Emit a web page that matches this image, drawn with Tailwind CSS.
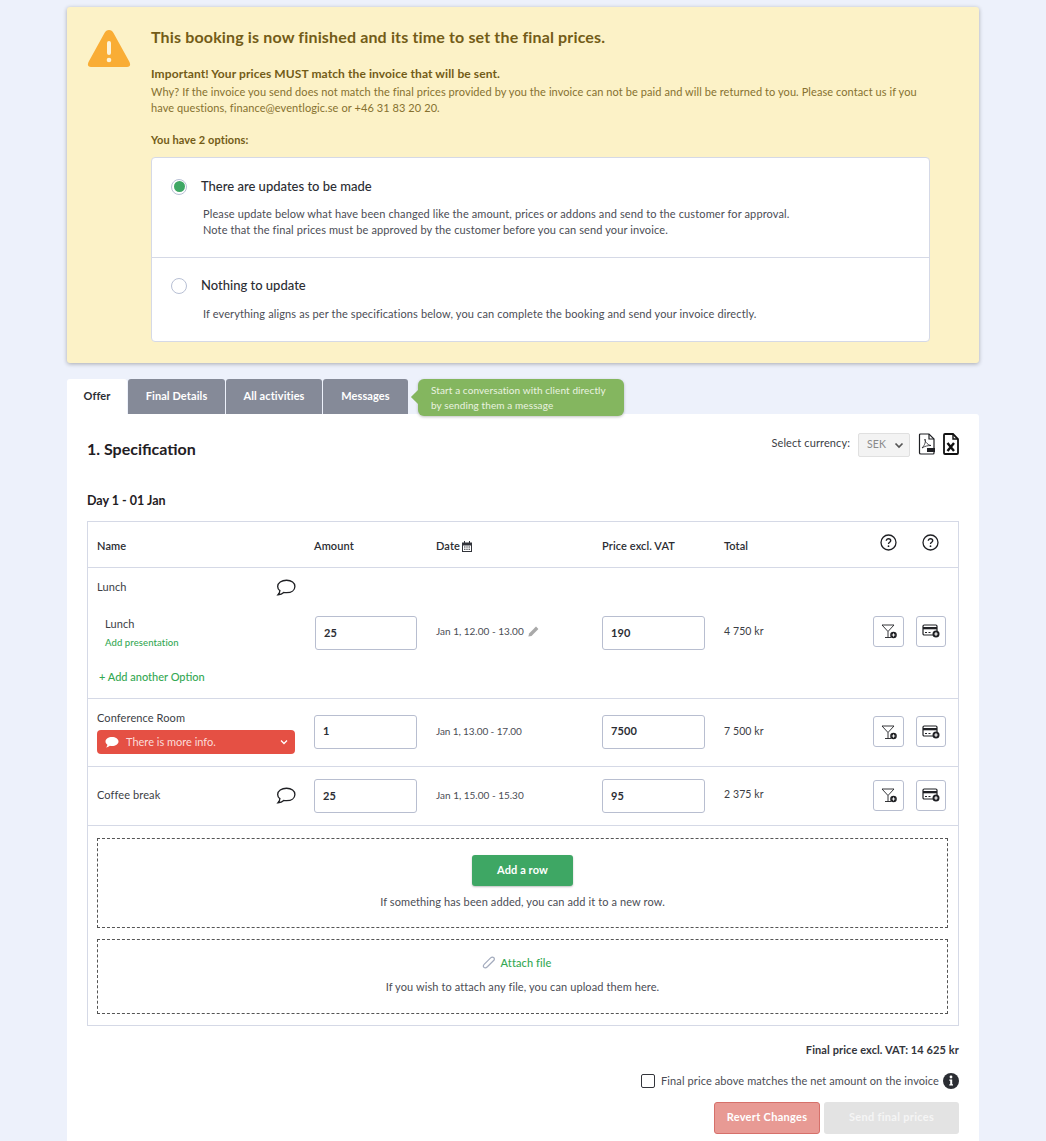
<!DOCTYPE html>
<html lang="en">
<head>
    <meta charset="UTF-8">
    <meta name="viewport" content="width=device-width, initial-scale=1.0">
    <title>Final prices</title>
    <script src="https://cdn.jsdelivr.net/npm/@tailwindcss/browser@4"></script>
</head>
<body class="bg-[#edf1fb] font-['Lato','Open_Sans',sans-serif] tracking-[0.1px] text-[#2b2d33] h-[1141px] overflow-hidden">
    <div class="w-[912px] ml-[67px] pt-[7px]">

        <!-- Warning -->
        <div class="h-[356px] bg-[#fcf2c7] rounded-[3px] shadow-[0_1px_4px_rgba(0,0,0,0.3)] flex">
            <div class="w-[84px] pl-[20px] pt-[20px] shrink-0">
                <svg width="44" height="44" viewBox="0 0 44 44">
                    <path d="M22 3 Q19 3 17.500 6 L1.500 35 Q-0.500 40 4 40 L40 40 Q44.500 40 42.500 35 L26.500 6 Q25 3 22 3Z" fill="#f9ad35"/>
                    <rect x="20" y="14" width="4" height="14" rx="2" fill="#fdf3d8"/>
                    <circle cx="22" cy="33" r="2.300" fill="#fdf3d8"/>
                </svg>
            </div>
            <div class="w-[779px]">
                <h2 class="mt-[21px] text-[16px] leading-[18px] font-bold tracking-[0.15px] text-[#735c17]">This booking is now finished and its time to set the final prices.</h2>
                <p class="mt-[21px] text-[12px] leading-[14px] font-bold text-[#735c17]">Important! Your prices MUST match the invoice that will be sent.</p>
                <p class="mt-[3px] text-[11px] leading-[16px] tracking-[0.08px] text-[#86712f]">Why? If the invoice you send does not match the final prices provided by you the invoice can not be paid and will be returned to you. Please contact us if you have questions, finance@eventlogic.se or +46 31 83 20 20.</p>
                <p class="mt-[17px] text-[11px] leading-[14px] font-bold text-[#735c17]">You have 2 options:</p>
                <div class="mt-[10px] bg-white rounded-[4px] border border-[#d5d9e6] h-[185px]">
                    <div class="h-[100px] border-b border-[#d5d9e6] pl-[19px] pt-[19px]">
                        <div class="flex items-center gap-[14px]">
                            <span class="w-4 h-4 rounded-full border border-[#b8c0d4] flex items-center justify-center"><span class="w-[11px] h-[11px] rounded-full bg-[#3ea764]"></span></span>
                            <span class="text-[13px] tracking-normal font-medium">There are updates to be made</span>
                        </div>
                        <p class="mt-[9px] ml-[32px] text-[11px] leading-[16px] tracking-[0.12px] text-[#4b4d55]">Please update below what have been changed like the amount, prices or addons and send to the customer for approval.<br>Note that the final prices must be approved by the customer before you can send your invoice.</p>
                    </div>
                    <div class="pl-[19px] pt-[18px]">
                        <div class="flex items-center gap-[14px]">
                            <span class="w-4 h-4 rounded-full border border-[#b8c0d4]"></span>
                            <span class="text-[13px] tracking-normal font-medium">Nothing to update</span>
                        </div>
                        <p class="mt-[10px] ml-[32px] text-[11px] leading-[16px] tracking-[0.12px] text-[#4b4d55]">If everything aligns as per the specifications below, you can complete the booking and send your invoice directly.</p>
                    </div>
                </div>
            </div>
        </div>

        <!-- Tabs -->
        <div class="mt-[16px] h-[35px] flex items-start relative z-10">
            <div class="w-[60px] h-[35px] bg-white rounded-t-[3px] flex items-center justify-center text-[11px] font-bold">Offer</div>
            <div class="ml-px w-[97px] h-[35px] bg-[#858a98] rounded-t-[3px] flex items-center justify-center text-[11px] font-bold text-white">Final Details</div>
            <div class="ml-px w-[96px] h-[35px] bg-[#858a98] rounded-t-[3px] flex items-center justify-center text-[11px] font-bold text-white">All activities</div>
            <div class="ml-px w-[85px] h-[35px] bg-[#858a98] rounded-t-[3px] flex items-center justify-center text-[11px] font-bold text-white">Messages</div>
            <div class="relative ml-[10px] w-[206px] h-[37px] bg-[#84b65f] rounded-[6px] shadow-[0_1px_3px_rgba(0,0,0,0.25)] pl-[13px] pt-[4px] text-[10px] leading-[15px] text-[#eaf3e0]">
                <span class="absolute left-[-5px] top-[13px] w-[10px] h-[10px] bg-[#84b65f] rotate-45"></span>
                <span class="relative">Start a conversation with client directly<br>by sending them a message</span>
            </div>
        </div>

        <!-- Panel -->
        <div class="h-[727px] bg-white rounded-tr-[3px] pl-[20px] pr-[20px]">
            <div class="h-[107px] flex items-start justify-between">
                <h2 class="mt-[25px] text-[16px] leading-[20px] font-bold tracking-normal text-[#1f2024]">1. Specification</h2>
                <div class="mt-[19px] flex items-start">
                    <span class="text-[11px] leading-[20px] text-[#3c3e45]">Select currency:</span>
                    <div class="ml-2 w-[52px] h-[24px] bg-[#f3f3f3] border border-[#e0e0e0] rounded-[2px] flex items-center justify-between pl-2 pr-[5px] text-[10.500px] text-[#8a8a8a]">
                        SEK
                        <svg width="10" height="10" viewBox="0 0 10 10"><path d="M1.500 3.500 5 7 8.500 3.500" fill="none" stroke="#555" stroke-width="1.700"/></svg>
                    </div>
                    <svg class="ml-[8px]" width="18" height="22" viewBox="0 0 18 22" fill="none" stroke="#1f2024" stroke-width="1.200">
                        <path d="M2.500 1H11L16 6V20Q16 21 15 21H3Q1.500 21 1.500 20V2Q1.500 1 2.500 1Z"/>
                        <path d="M11 1V6H16"/>
                        <path d="M4 15C7 12 8 8 7 6C6 7 9 12 13 12.500C10 12.500 7 13 4 15Z" stroke-width="0.800"/>
                        <rect x="9" y="15" width="8" height="4" fill="#1f2024" stroke="none"/>
                    </svg>
                    <svg class="ml-[7px]" width="16" height="22" viewBox="0 0 16 22" fill="none" stroke="#111" stroke-width="1.800">
                        <path d="M2 1H10L15 6V20Q15 21 14 21H2Q1 21 1 20V2Q1 1 2 1Z"/>
                        <path d="M10 1V6H15" stroke-width="1.400"/>
                        <path d="M4.500 10 11 18M11 10 4.500 18" stroke-width="2.400"/>
                    </svg>
                </div>
            </div>
            <h3 class="-mt-[27px] text-[12.500px] leading-[14px] font-bold tracking-normal text-[#1f2024]">Day 1 - 01 Jan</h3>

            <!-- Table -->
            <div class="mt-[13px] w-[872px] h-[505px] border border-[#d5d9e6]">
                <div class="h-[46px] border-b border-[#d5d9e6] pl-[9px] pt-[4px] grid grid-cols-[217px_122px_166px_122px_149px_42px_30px] items-center text-[11px] font-semibold">
                    <span>Name</span>
                    <span>Amount</span>
                    <span class="flex items-center gap-[2px]">Date
                        <svg width="10" height="11" viewBox="0 0 10 11" fill="#33353b"><path fill-rule="evenodd" d="M0 1.500H2V0H3V1.500H7V0H8V1.500H10V11H0ZM1 4.500V10H9V4.500ZM2 5.500H3.500V6.500H2ZM4.300 5.500H5.700V6.500H4.300ZM6.500 5.500H8V6.500H6.500ZM2 7.800H3.500V8.800H2ZM4.300 7.800H5.700V8.800H4.300ZM6.500 7.800H8V8.800H6.500Z"/></svg>
                    </span>
                    <span>Price excl. VAT</span>
                    <span>Total</span>
                    <svg class="ml-[7px] -mt-[8px]" width="17" height="17" viewBox="0 0 17 17"><circle cx="8.500" cy="8.500" r="7.500" fill="none" stroke="#1f2024" stroke-width="1.300"/><path d="M6.300 6.800C6.300 4 10.700 4 10.700 6.800C10.700 8.300 8.500 8.200 8.500 10" fill="none" stroke="#1f2024" stroke-width="1.400"/><circle cx="8.500" cy="12.200" r="0.900" fill="#1f2024"/></svg>
                    <svg class="ml-[7px] -mt-[8px]" width="17" height="17" viewBox="0 0 17 17"><circle cx="8.500" cy="8.500" r="7.500" fill="none" stroke="#1f2024" stroke-width="1.300"/><path d="M6.300 6.800C6.300 4 10.700 4 10.700 6.800C10.700 8.300 8.500 8.200 8.500 10" fill="none" stroke="#1f2024" stroke-width="1.400"/><circle cx="8.500" cy="12.200" r="0.900" fill="#1f2024"/></svg>
                </div>

                <!-- Lunch -->
                <div class="h-[131px] border-b border-[#d5d9e6] pl-[9px]">
                    <div class="w-[199px] h-[39px] flex items-center justify-between text-[11px] text-[#3c3e45]">
                        Lunch
                        <svg width="20" height="19" viewBox="0 0 18 17" fill="none" stroke="#1f2024" stroke-width="1.200"><path d="M9.500 2C5 2 1.500 4.300 1.500 7.500C1.500 9.200 2.300 10.400 3.500 11.300C3.500 13 2.800 14 1.800 15C4 15 5.800 14.200 7 13C7.500 13 8.500 13.100 9.500 13.100C14 13.100 17 10.800 17 7.500C17 4.300 14 2 9.500 2Z"/></svg>
                    </div>
                    <div class="grid grid-cols-[217px_122px_166px_122px_149px_43px_31px] items-center h-[48px]">
                        <div class="pl-2 mt-[3px]">
                            <div class="text-[11px] leading-[14px] text-[#3c3e45]">Lunch</div>
                            <div class="mt-[6px] text-[9.500px] leading-[12px] font-medium text-[#34a853]">Add presentation</div>
                        </div>
                        <div class="w-[102px] h-[34px] ml-px mt-[4px] border border-[#b8bed0] rounded-[3px] flex items-center pl-2 text-[11px] font-bold">25</div>
                        <div class="flex items-center gap-[4px] text-[10px] tracking-normal text-[#4b4d55]">Jan 1, 12.00 - 13.00
                            <svg width="11" height="11" viewBox="0 0 11 11" fill="#a9a9a9"><path d="M8 .6 10.400 3 3.500 9.900 .4 10.600 1.100 7.500Z"/></svg>
                        </div>
                        <div class="w-[103px] h-[34px] mt-[4px] border border-[#b8bed0] rounded-[3px] flex items-center pl-2 text-[11px] font-bold">190</div>
                        <div class="mt-[2px] text-[10.500px] text-[#3c3e45]">4 750 kr</div>
                        <div class="w-[31px] h-[31px] border border-[#b8bed0] rounded-[3px] flex items-center justify-center">
                            <svg width="18" height="18" viewBox="0 0 18 18" fill="none" stroke="#1f2024" stroke-width="0.900"><path d="M2 3H14L8 9.500ZM8 9.500V15.500M5 15.500H11"/><circle cx="13.500" cy="13" r="3.300" fill="#1f2024" stroke="none"/><path d="M11.800 13H15.200M13.500 11.300V14.700" stroke="#fff"/></svg>
                        </div>
                        <div class="w-[30px] h-[31px] border border-[#b8bed0] rounded-[3px] flex items-center justify-center">
                            <svg width="18" height="16" viewBox="0 0 18 16" fill="none" stroke="#1f2024" stroke-width="1.200"><rect x="1" y="2" width="14" height="10" rx="1.200"/><rect x="1" y="4" width="14" height="2.300" fill="#1f2024" stroke="none"/><path d="M3 9.500H5M6.500 9.500H8.500" /><circle cx="14" cy="11" r="3.500" fill="#1f2024" stroke="none"/><path d="M12.300 11H15.700M14 9.300V12.700" stroke="#fff"/></svg>
                        </div>
                    </div>
                    <div class="mt-[15px] ml-[2px] text-[11px] leading-[14px] tracking-normal font-medium text-[#34a853]">+ Add another Option</div>
                </div>

                <!-- Conference Room -->
                <div class="h-[68px] border-b border-[#d5d9e6] pl-[9px] grid grid-cols-[217px_122px_166px_122px_149px_43px_31px] items-center">
                    <div>
                        <div class="text-[11px] leading-[14px] text-[#3c3e45]">Conference Room</div>
                        <div class="mt-[5px] w-[198px] h-[24px] bg-[#e55044] rounded-[4px] flex items-center pl-2 pr-[7px] text-[11px] tracking-normal text-[#fbdcd9]">
                            <svg width="14" height="13" viewBox="0 0 14 13" fill="#fff"><path d="M7 1C3.400 1 .5 2.900 .5 5.500C.5 6.800 1.200 7.900 2.400 8.700C2.300 9.800 1.700 10.700 1 11.400C2.700 11.200 4 10.600 4.900 9.800C5.600 9.900 6.300 10 7 10C10.600 10 13.500 8.100 13.500 5.500C13.500 2.900 10.600 1 7 1Z"/></svg>
                            <span class="ml-[7px]">There is more info.</span>
                            <svg class="ml-auto" width="8" height="8" viewBox="0 0 8 8"><path d="M1 2.500 4 5.500 7 2.500" fill="none" stroke="#fff" stroke-width="1.300"/></svg>
                        </div>
                    </div>
                    <div class="w-[103px] h-[34px] -mt-[2px] border border-[#b8bed0] rounded-[3px] flex items-center pl-2 text-[11px] font-bold">1</div>
                    <div class="-mt-[2px] text-[10px] tracking-[-0.1px] text-[#4b4d55]">Jan 1, 13.00 - 17.00</div>
                    <div class="w-[103px] h-[34px] -mt-[2px] border border-[#b8bed0] rounded-[3px] flex items-center pl-2 text-[11px] font-bold">7500</div>
                    <div class="-mt-[2px] text-[10.500px] text-[#3c3e45]">7 500 kr</div>
                    <div class="w-[31px] h-[31px] -mt-[2px] border border-[#b8bed0] rounded-[3px] flex items-center justify-center">
                        <svg width="18" height="18" viewBox="0 0 18 18" fill="none" stroke="#1f2024" stroke-width="0.900"><path d="M2 3H14L8 9.500ZM8 9.500V15.500M5 15.500H11"/><circle cx="13.500" cy="13" r="3.300" fill="#1f2024" stroke="none"/><path d="M11.800 13H15.200M13.500 11.300V14.700" stroke="#fff"/></svg>
                    </div>
                    <div class="w-[30px] h-[31px] -mt-[2px] border border-[#b8bed0] rounded-[3px] flex items-center justify-center">
                        <svg width="18" height="16" viewBox="0 0 18 16" fill="none" stroke="#1f2024" stroke-width="1.200"><rect x="1" y="2" width="14" height="10" rx="1.200"/><rect x="1" y="4" width="14" height="2.300" fill="#1f2024" stroke="none"/><path d="M3 9.500H5M6.500 9.500H8.500" /><circle cx="14" cy="11" r="3.500" fill="#1f2024" stroke="none"/><path d="M12.300 11H15.700M14 9.300V12.700" stroke="#fff"/></svg>
                    </div>
                </div>

                <!-- Coffee break -->
                <div class="h-[59px] border-b border-[#d5d9e6] pl-[9px] grid grid-cols-[217px_122px_166px_122px_149px_43px_31px] items-center">
                    <div class="w-[199px] -mt-[2px] flex items-center justify-between text-[11px] text-[#3c3e45]">
                        Coffee break
                        <svg width="20" height="19" viewBox="0 0 18 17" fill="none" stroke="#1f2024" stroke-width="1.200"><path d="M9.500 2C5 2 1.500 4.300 1.500 7.500C1.500 9.200 2.300 10.400 3.500 11.300C3.500 13 2.800 14 1.800 15C4 15 5.800 14.200 7 13C7.500 13 8.500 13.100 9.500 13.100C14 13.100 17 10.800 17 7.500C17 4.300 14 2 9.500 2Z"/></svg>
                    </div>
                    <div class="w-[103px] h-[34px] border border-[#b8bed0] rounded-[3px] flex items-center pl-2 text-[11px] font-bold">25</div>
                    <div class="-mt-[2px] text-[10px] tracking-normal text-[#4b4d55]">Jan 1, 15.00 - 15.30</div>
                    <div class="w-[103px] h-[34px] border border-[#b8bed0] rounded-[3px] flex items-center pl-2 text-[11px] font-bold">95</div>
                    <div class="-mt-[2px] text-[10.500px] text-[#3c3e45]">2 375 kr</div>
                    <div class="w-[31px] h-[31px] -mt-[2px] border border-[#b8bed0] rounded-[3px] flex items-center justify-center">
                        <svg width="18" height="18" viewBox="0 0 18 18" fill="none" stroke="#1f2024" stroke-width="0.900"><path d="M2 3H14L8 9.500ZM8 9.500V15.500M5 15.500H11"/><circle cx="13.500" cy="13" r="3.300" fill="#1f2024" stroke="none"/><path d="M11.800 13H15.200M13.500 11.300V14.700" stroke="#fff"/></svg>
                    </div>
                    <div class="w-[30px] h-[31px] -mt-[2px] border border-[#b8bed0] rounded-[3px] flex items-center justify-center">
                        <svg width="18" height="16" viewBox="0 0 18 16" fill="none" stroke="#1f2024" stroke-width="1.200"><rect x="1" y="2" width="14" height="10" rx="1.200"/><rect x="1" y="4" width="14" height="2.300" fill="#1f2024" stroke="none"/><path d="M3 9.500H5M6.500 9.500H8.500" /><circle cx="14" cy="11" r="3.500" fill="#1f2024" stroke="none"/><path d="M12.300 11H15.700M14 9.300V12.700" stroke="#fff"/></svg>
                    </div>
                </div>

                <!-- Add a row -->
                <div class="mt-[12px] ml-[9px] w-[851px] h-[90px] border border-dashed border-[#555] flex flex-col items-center pt-[16px]">
                    <div class="w-[101px] h-[31px] bg-[#3ea764] rounded-[3px] shadow-[0_1px_2px_rgba(0,0,0,0.25)] flex items-center justify-center text-[11px] font-bold text-white">Add a row</div>
                    <p class="mt-[9px] text-[11px] leading-[14px] text-[#4b4d55]">If something has been added, you can add it to a new row.</p>
                </div>

                <!-- Attach file -->
                <div class="mt-[11px] ml-[9px] w-[851px] h-[75px] border border-dashed border-[#555] flex flex-col items-center pt-[16px]">
                    <div class="pr-[12px] flex items-center gap-[5px] text-[11px] leading-[14px] font-medium text-[#34a853]">
                        <svg width="14" height="14" viewBox="0 0 13 13" fill="none" stroke="#a3abbd" stroke-width="1.100"><path d="M11.500 3.500 5 10C3.800 11.200 2.500 11.200 1.800 10.500C1 9.700 1.200 8.500 2.200 7.500L8 1.700C9 .8 10.300 .9 11 1.600C11.800 2.400 11.600 3.500 10.800 4.300L5.200 9.700"/></svg>
                        Attach file
                    </div>
                    <p class="mt-[10px] text-[11px] leading-[14px] text-[#4b4d55]">If you wish to attach any file, you can upload them here.</p>
                </div>
            </div>

            <!-- Footer -->
            <div class="w-[872px] flex flex-col items-end">
                <div class="mt-[17px] text-[11px] leading-[14px] font-bold text-[#33353b]">Final price excl. VAT: 14 625 kr</div>
                <div class="mt-[16px] flex items-center">
                    <span class="w-[14px] h-[14px] border-[1.500px] border-[#33353b] rounded-[2px]"></span>
                    <span class="ml-[6px] text-[11px] text-[#4b4d55]">Final price above matches the net amount on the invoice</span>
                    <svg class="ml-[4px]" width="16" height="16" viewBox="0 0 16 16"><circle cx="8" cy="8" r="8" fill="#2b2d33"/><circle cx="8" cy="4" r="1.400" fill="#fff"/><path d="M6.300 6.500H9.200V11.300H10V12.500H6.300V11.300H7.200V7.700H6.300Z" fill="#fff"/></svg>
                </div>
                <div class="mt-[12px] flex gap-1">
                    <div class="w-[106px] h-[32px] bg-[#e89a94] border border-[#d6706a] rounded-[3px] flex items-center justify-center text-[11px] tracking-[0.3px] font-bold text-white">Revert Changes</div>
                    <div class="w-[135px] h-[32px] bg-[#e3e3e3] rounded-[3px] flex items-center justify-center text-[11px] tracking-[0.3px] font-bold text-[#f5f5f5]">Send final prices</div>
                </div>
            </div>
        </div>
    </div>
</body>
</html>
